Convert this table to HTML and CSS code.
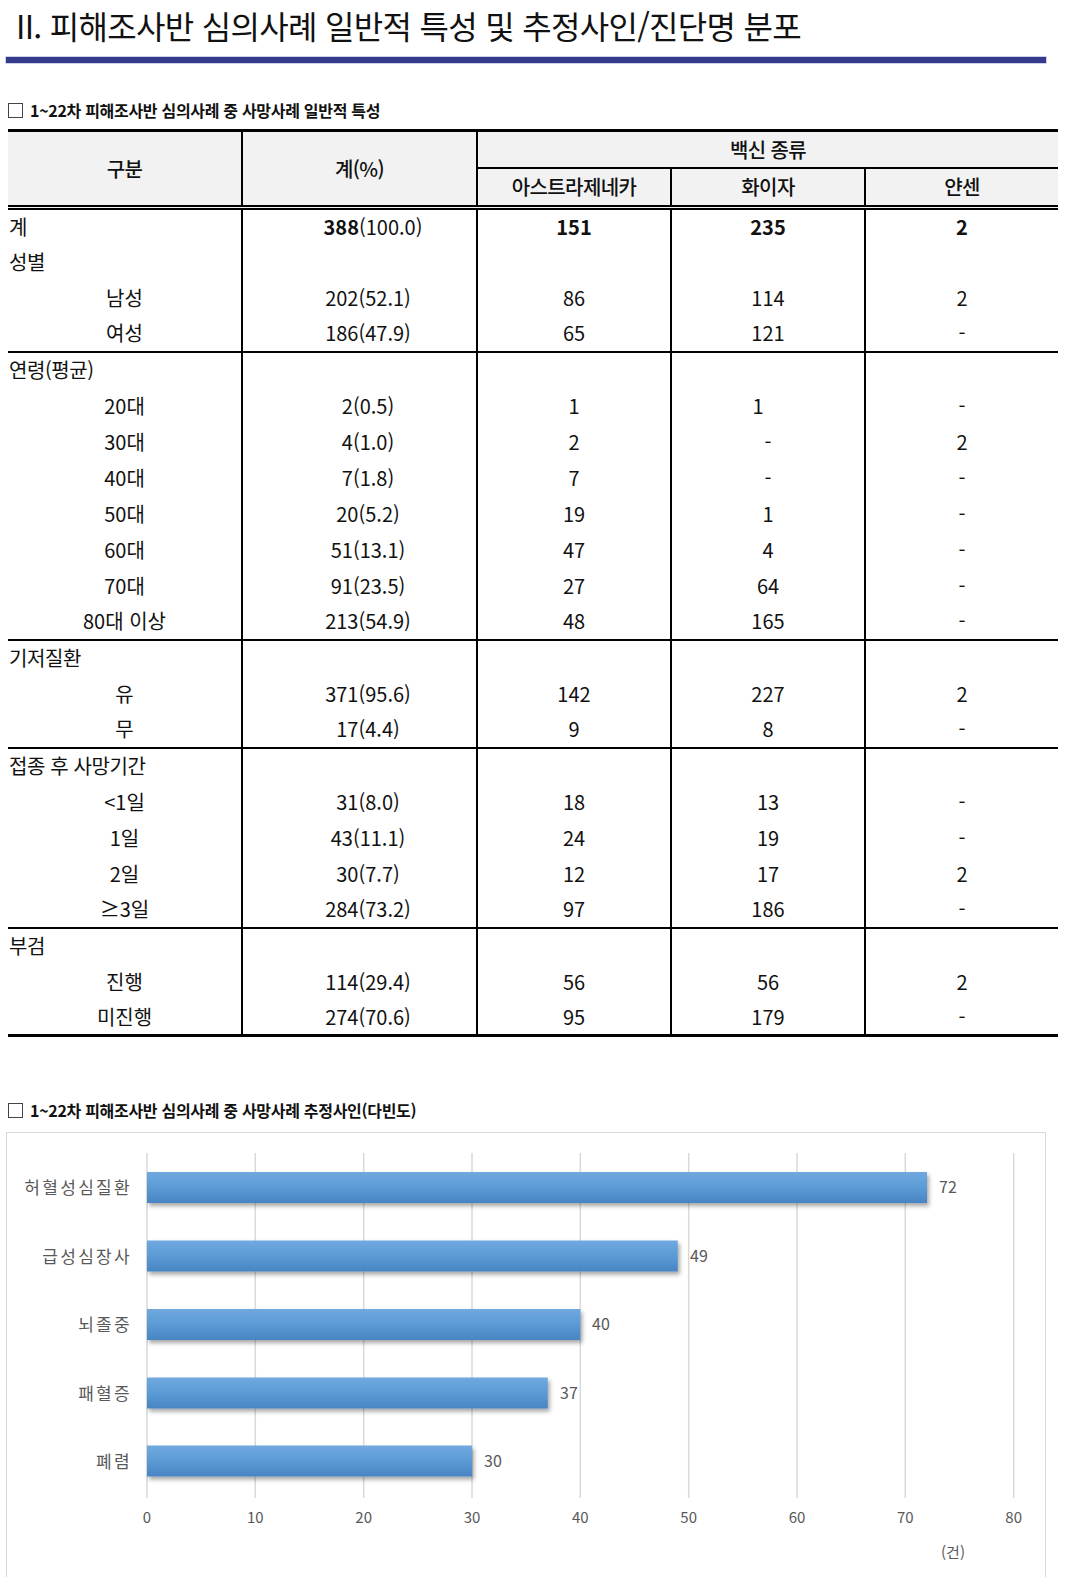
FILE: index.html
```html
<!DOCTYPE html>
<html lang="ko">
<head>
<meta charset="utf-8">
<title>피해조사반 심의사례</title>
<link rel="stylesheet" href="styles.css">
</head>
<body>
<h1 class="title">II. 피해조사반 심의사례 일반적 특성 및 추정사인/진단명 분포</h1>
<div class="title-rule"></div>

<p class="caption"><span class="box"></span>1~22차 피해조사반 심의사례 중 사망사례 일반적 특성</p>

<table class="stats">
  <colgroup>
    <col class="c1"><col class="c2"><col class="c3"><col class="c4"><col class="c5">
  </colgroup>
  <thead>
    <tr class="h1">
      <th rowspan="2" class="first">구분</th>
      <th rowspan="2">계(%)</th>
      <th colspan="3" class="group">백신 종류</th>
    </tr>
    <tr class="h2">
      <th>아스트라제네카</th>
      <th>화이자</th>
      <th>얀센</th>
    </tr>
  </thead>
  <tbody>
    <tr><td class="cat">계</td><td class="tot tot-main"><b>388</b>(100.0)</td><td><b>151</b></td><td><b>235</b></td><td><b>2</b></td></tr>
    <tr><td class="cat">성별</td><td class="tot"></td><td></td><td></td><td></td></tr>
    <tr><td class="sub">남성</td><td class="tot">202(52.1)</td><td>86</td><td>114</td><td>2</td></tr>
    <tr><td class="sub">여성</td><td class="tot">186(47.9)</td><td>65</td><td>121</td><td>-</td></tr>
  </tbody>
  <tbody>
    <tr><td class="cat">연령(평균)</td><td class="tot"></td><td></td><td></td><td></td></tr>
    <tr><td class="sub">20대</td><td class="tot">2(0.5)</td><td>1</td><td class="shift">1</td><td>-</td></tr>
    <tr><td class="sub">30대</td><td class="tot">4(1.0)</td><td>2</td><td>-</td><td>2</td></tr>
    <tr><td class="sub">40대</td><td class="tot">7(1.8)</td><td>7</td><td>-</td><td>-</td></tr>
    <tr><td class="sub">50대</td><td class="tot">20(5.2)</td><td>19</td><td>1</td><td>-</td></tr>
    <tr><td class="sub">60대</td><td class="tot">51(13.1)</td><td>47</td><td>4</td><td>-</td></tr>
    <tr><td class="sub">70대</td><td class="tot">91(23.5)</td><td>27</td><td>64</td><td>-</td></tr>
    <tr><td class="sub">80대 이상</td><td class="tot">213(54.9)</td><td>48</td><td>165</td><td>-</td></tr>
  </tbody>
  <tbody>
    <tr><td class="cat">기저질환</td><td class="tot"></td><td></td><td></td><td></td></tr>
    <tr><td class="sub">유</td><td class="tot">371(95.6)</td><td>142</td><td>227</td><td>2</td></tr>
    <tr><td class="sub">무</td><td class="tot">17(4.4)</td><td>9</td><td>8</td><td>-</td></tr>
  </tbody>
  <tbody>
    <tr><td class="cat">접종 후 사망기간</td><td class="tot"></td><td></td><td></td><td></td></tr>
    <tr><td class="sub">&lt;1일</td><td class="tot">31(8.0)</td><td>18</td><td>13</td><td>-</td></tr>
    <tr><td class="sub">1일</td><td class="tot">43(11.1)</td><td>24</td><td>19</td><td>-</td></tr>
    <tr><td class="sub">2일</td><td class="tot">30(7.7)</td><td>12</td><td>17</td><td>2</td></tr>
    <tr><td class="sub">≥3일</td><td class="tot">284(73.2)</td><td>97</td><td>186</td><td>-</td></tr>
  </tbody>
  <tbody>
    <tr><td class="cat">부검</td><td class="tot"></td><td></td><td></td><td></td></tr>
    <tr><td class="sub">진행</td><td class="tot">114(29.4)</td><td>56</td><td>56</td><td>2</td></tr>
    <tr><td class="sub">미진행</td><td class="tot">274(70.6)</td><td>95</td><td>179</td><td>-</td></tr>
  </tbody>
</table>

<p class="caption caption-chart"><span class="box"></span>1~22차 피해조사반 심의사례 중 사망사례 추정사인(다빈도)</p>

<div class="chart">
  <svg class="chart-svg" width="1038" height="458" viewBox="0 0 1038 458">
    <defs>
      <linearGradient id="barGrad" x1="0" y1="0" x2="0" y2="1">
        <stop offset="0" stop-color="#70a9df"/>
        <stop offset="0.5" stop-color="#5b9bd5"/>
        <stop offset="1" stop-color="#4884c3"/>
      </linearGradient>
      <filter id="shadow" x="-5%" y="-30%" width="110%" height="170%">
        <feDropShadow dx="2" dy="3" stdDeviation="2" flood-color="#000" flood-opacity="0.35"/>
      </filter>
    </defs>
    <g class="grid">
      <line x1="140" y1="20" x2="140" y2="365"/>
      <line x1="248.3" y1="20" x2="248.3" y2="365"/>
      <line x1="356.7" y1="20" x2="356.7" y2="365"/>
      <line x1="465" y1="20" x2="465" y2="365"/>
      <line x1="573.3" y1="20" x2="573.3" y2="365"/>
      <line x1="681.7" y1="20" x2="681.7" y2="365"/>
      <line x1="790" y1="20" x2="790" y2="365"/>
      <line x1="898.3" y1="20" x2="898.3" y2="365"/>
      <line x1="1006.7" y1="20" x2="1006.7" y2="365"/>
    </g>
    <g class="bars">
      <rect x="140" y="39" width="780" height="31"/>
      <rect x="140" y="107.5" width="530.8" height="31"/>
      <rect x="140" y="176" width="433.3" height="31"/>
      <rect x="140" y="244.5" width="400.8" height="31"/>
      <rect x="140" y="312.5" width="325" height="31"/>
    </g>
    <g class="vals">
      <text x="932" y="60">72</text>
      <text x="683" y="128.5">49</text>
      <text x="585" y="197">40</text>
      <text x="553" y="265.5">37</text>
      <text x="477" y="333.5">30</text>
    </g>
    <g class="cats">
      <text x="125" y="61">허혈성심질환</text>
      <text x="125" y="129.5">급성심장사</text>
      <text x="125" y="198">뇌졸중</text>
      <text x="125" y="266.5">패혈증</text>
      <text x="125" y="334.5">폐렴</text>
    </g>
    <g class="ticks">
      <text x="140" y="390">0</text>
      <text x="248.3" y="390">10</text>
      <text x="356.7" y="390">20</text>
      <text x="465" y="390">30</text>
      <text x="573.3" y="390">40</text>
      <text x="681.7" y="390">50</text>
      <text x="790" y="390">60</text>
      <text x="898.3" y="390">70</text>
      <text x="1006.7" y="390">80</text>
      <text x="946" y="425">(건)</text>
    </g>
  </svg>
</div>
</body>
</html>
```

FILE: styles.css
```css
* { box-sizing: border-box; }

body {
  margin: 0;
  width: 1080px;
  background: #fff;
  color: #111;
  font-family: "Noto Sans CJK KR", "Noto Sans", sans-serif;
}

.title {
  margin: 0;
  padding-left: 16px;
  font-size: 32px;
  line-height: 50px;
  font-weight: 400;
  letter-spacing: -0.7px;
  white-space: nowrap;
  color: #111;
}

.title-rule {
  margin: 7px 0 0 6px;
  width: 1040px;
  height: 6px;
  background: #343b8c;
  box-shadow: 0 0 0 0.5px #9fa3cf;
}

.caption {
  margin: 35px 0 0 8px;
  display: flex;
  align-items: center;
  gap: 7px;
  font-size: 16px;
  font-weight: 700;
  line-height: 24px;
  letter-spacing: -0.3px;
  color: #111;
}

.caption .box {
  flex: none;
  width: 15px;
  height: 15px;
  border: 1px solid #444;
}

.stats {
  margin: 7px 0 0 8px;
  width: 1050px;
  border-collapse: collapse;
  table-layout: fixed;
  font-size: 20px;
  color: #111;
}

.stats .c1 { width: 234px; }
.stats .c2 { width: 235px; }
.stats .c3 { width: 194px; }
.stats .c4 { width: 194px; }
.stats .c5 { width: 193px; }

.stats th {
  padding: 0;
  background: #f2f2f2;
  font-weight: 500;
  letter-spacing: -0.6px;
  border-left: 2px solid #000;
  border-bottom: 5px double #000;
}

.stats .h1 th { height: 37px; }
.stats .h2 th { height: 40px; }

.stats thead tr:first-child th {
  border-top: 3px solid #000;
}

.stats th.first { border-left: none; }

.stats th.group { border-bottom: 2px solid #000; }

.stats td {
  height: 36px;
  padding: 0;
  text-align: center;
  border-left: 2px solid #000;
  line-height: 1;
}

.stats td.cat,
.stats td.sub { border-left: none; }

.stats td.cat {
  text-align: left;
  padding-left: 1px;
  letter-spacing: -0.4px;
}

.stats td.tot { padding-left: 17px; }

.stats td.tot-main { padding-left: 27px; }

.stats td.shift { padding-right: 20px; }

.stats td b { font-weight: 700; }

.stats tbody tr:last-child td { border-bottom: 2px solid #000; }

.stats tbody:last-child tr:last-child td { border-bottom: 3px solid #000; }

.caption-chart { margin-top: 61px; }

.chart {
  margin: 10px 0 0 6px;
  width: 1040px;
  height: 460px;
  border: 1px solid #d9d9d9;
}

.chart-svg { display: block; }

.grid line {
  stroke: #d9d9d9;
  stroke-width: 1.5;
}

.bars rect {
  fill: url(#barGrad);
  filter: url(#shadow);
}

.vals text,
.cats text,
.ticks text {
  fill: #595959;
  font-family: "Noto Sans CJK KR", "Noto Sans", sans-serif;
}

.vals text { font-size: 16px; }

.cats text {
  font-size: 17px;
  letter-spacing: 2.3px;
  text-anchor: end;
}

.ticks text {
  font-size: 15px;
  text-anchor: middle;
}
```
